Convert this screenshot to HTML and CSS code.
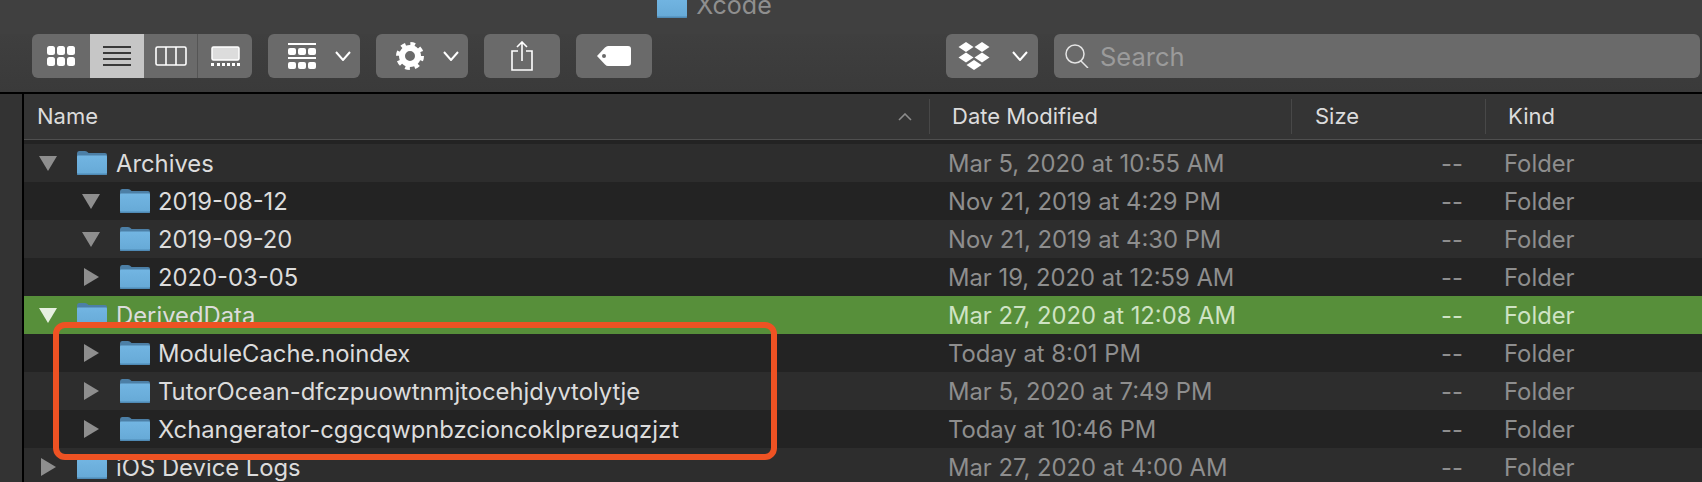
FILE: index.html
```html
<!DOCTYPE html>
<html lang="en">

<head>
    <meta charset="UTF-8">
    <meta name="viewport" content="width=device-width, initial-scale=1.0">
    <title>Xcode</title>
    <link rel="stylesheet" href="styles.css">
</head>

<body>

    <svg class="defs" width="0" height="0">
        <symbol id="folder" viewBox="0 0 30 24">
            <path d="M0 2.5Q0 0 2 0H8Q10 0 11 1.5L11.5 2H28Q30 2 30 4V8H0Z" fill="#4c7fa6" />
            <path d="M0 5.5Q0 4.5 1 4.5H29Q30 4.5 30 5.5V22Q30 24 28 24H2Q0 24 0 22Z" fill="url(#folderFill)" />
            <rect x="0" y="22.6" width="30" height="1.4" rx="0.7" fill="#4f8ab5" />
        </symbol>
        <linearGradient id="folderFill" x1="0" y1="0" x2="0" y2="1">
            <stop offset="0" stop-color="#72b5e2" />
            <stop offset="1" stop-color="#66a9d6" />
        </linearGradient>
        <symbol id="open" viewBox="0 0 18 18">
            <path d="M0 2H18L9 17Z" fill="currentColor" />
        </symbol>
        <symbol id="closed" viewBox="0 0 18 18">
            <path d="M2 0L17 9L2 18Z" fill="currentColor" />
        </symbol>
        <symbol id="chevron" viewBox="0 0 16 10">
            <path d="M1 1L8 9L15 1" fill="none" stroke="#fff" stroke-width="2" />
        </symbol>
    </svg>

    <div class="titlebar">
        <svg class="title-folder" width="30" height="24"><use href="#folder" /></svg>
        <span class="title-text">Xcode</span>
    </div>

    <header class="toolbar">
        <div class="btn-group">
            <button class="btn view-a">
                <svg width="28" height="20" viewBox="0 0 28 20" fill="#fff">
                    <rect x="0" y="0" width="8" height="9" rx="2.5" /><rect x="10" y="0" width="8" height="9" rx="2.5" /><rect x="20" y="0" width="8" height="9" rx="2.5" />
                    <rect x="0" y="11" width="8" height="9" rx="2.5" /><rect x="10" y="11" width="8" height="9" rx="2.5" /><rect x="20" y="11" width="8" height="9" rx="2.5" />
                </svg>
            </button>
            <button class="btn view-b selected">
                <svg width="28" height="20" viewBox="0 0 28 20" fill="#3a3a3a">
                    <rect y="0" width="28" height="2" /><rect y="6" width="28" height="2" /><rect y="12" width="28" height="2" /><rect y="18" width="28" height="2" />
                </svg>
            </button>
            <button class="btn view-c">
                <svg width="32" height="20" viewBox="0 0 32 20" fill="none" stroke="#fff" stroke-width="1.6">
                    <rect x="1" y="1" width="30" height="18" rx="1.5" /><path d="M11 1V19M21 1V19" />
                </svg>
            </button>
            <button class="btn view-d">
                <svg width="29" height="20" viewBox="0 0 29 20" fill="#fff">
                    <rect x="1" y="1" width="27" height="13" rx="1.5" fill="#dcdcdc" stroke="#fff" stroke-width="1.5" />
                    <rect x="0" y="17" width="3" height="3" /><rect x="6" y="17" width="3" height="3" /><rect x="11" y="17" width="3" height="3" /><rect x="16" y="17" width="3" height="3" /><rect x="21" y="17" width="3" height="3" /><rect x="26" y="17" width="3" height="3" />
                </svg>
            </button>
        </div>

        <button class="btn btn-arrange">
            <svg width="28" height="26" viewBox="0 0 28 26" fill="#fff">
                <rect y="0" width="28" height="2" /><rect y="14" width="28" height="2" />
                <rect x="0" y="5" width="8" height="7" rx="2" /><rect x="10" y="5" width="8" height="7" rx="2" /><rect x="20" y="5" width="8" height="7" rx="2" />
                <rect x="0" y="19" width="8" height="7" rx="2" /><rect x="10" y="19" width="8" height="7" rx="2" /><rect x="20" y="19" width="8" height="7" rx="2" />
            </svg>
            <svg class="chevron" width="16" height="10"><use href="#chevron" /></svg>
        </button>

        <button class="btn btn-action">
            <svg width="28" height="28" viewBox="0 0 28 28" fill="none" stroke="#fff">
                <circle cx="14" cy="14" r="8" stroke-width="6" />
                <circle cx="14" cy="14" r="11.5" stroke-width="5" stroke-dasharray="4.5 4.53" />
            </svg>
            <svg class="chevron" width="16" height="10"><use href="#chevron" /></svg>
        </button>

        <button class="btn btn-share">
            <svg width="22" height="30" viewBox="0 0 22 30" fill="none" stroke="#fff" stroke-width="1.6">
                <path d="M7 10H1V29H21V10H15" /><path d="M11 20V1M6 6L11 1L16 6" />
            </svg>
        </button>

        <button class="btn btn-tag">
            <svg width="34" height="20" viewBox="0 0 34 20">
                <path d="M0 10L8 1.5Q9.5 0 11 0H31Q34 0 34 3V17Q34 20 31 20H11Q9.5 20 8 18.5Z" fill="#fff" />
                <circle cx="7" cy="10" r="2" fill="#6a6a6a" />
            </svg>
        </button>

        <div class="toolbar-right">
            <button class="btn btn-dropbox">
                <svg width="32" height="28" viewBox="0 0 32 28" fill="#fff">
                    <path d="M8 0L15.5 5L8 10L.5 5Z" /><path d="M24 0L31.5 5L24 10L16.5 5Z" />
                    <path d="M8 10.5L15.5 15.5L8 20.5L.5 15.5Z" /><path d="M24 10.5L31.5 15.5L24 20.5L16.5 15.5Z" />
                    <path d="M16 18L23.5 23L16 28L8.5 23Z" />
                </svg>
                <svg class="chevron" width="16" height="10"><use href="#chevron" /></svg>
            </button>

            <div class="search">
                <svg width="25" height="24" viewBox="0 0 25 24" fill="none" stroke="#e4e4e4" stroke-width="1.5">
                    <circle cx="10" cy="10" r="9" /><path d="M16 17L23 24" />
                </svg>
                <span class="search-text">Search</span>
            </div>
        </div>
    </header>

    <div class="browser">
        <div class="side"></div>

        <main class="list">
            <div class="list-head">
                <div class="head-cell head-name">Name
                    <svg class="sort" width="14" height="8" viewBox="0 0 14 8" fill="none" stroke="#8c8c8c" stroke-width="1.6"><path d="M1 7L7 1L13 7" /></svg>
                </div>
                <div class="head-cell">Date Modified</div>
                <div class="head-cell head-size">Size</div>
                <div class="head-cell">Kind</div>
            </div>
            <div class="head-gap"></div>

            <div class="row">
                <div class="name"><svg class="tri"><use href="#open" /></svg><svg class="icon"><use href="#folder" /></svg>Archives</div>
                <div class="date">Mar 5, 2020 at 10:55 AM</div>
                <div class="size">--</div>
                <div class="kind">Folder</div>
            </div>
            <div class="row">
                <div class="name child"><svg class="tri"><use href="#open" /></svg><svg class="icon"><use href="#folder" /></svg>2019-08-12</div>
                <div class="date">Nov 21, 2019 at 4:29 PM</div>
                <div class="size">--</div>
                <div class="kind">Folder</div>
            </div>
            <div class="row">
                <div class="name child"><svg class="tri"><use href="#open" /></svg><svg class="icon"><use href="#folder" /></svg>2019-09-20</div>
                <div class="date">Nov 21, 2019 at 4:30 PM</div>
                <div class="size">--</div>
                <div class="kind">Folder</div>
            </div>
            <div class="row">
                <div class="name child"><svg class="tri"><use href="#closed" /></svg><svg class="icon"><use href="#folder" /></svg>2020-03-05</div>
                <div class="date">Mar 19, 2020 at 12:59 AM</div>
                <div class="size">--</div>
                <div class="kind">Folder</div>
            </div>
            <div class="row active">
                <div class="name"><svg class="tri"><use href="#open" /></svg><svg class="icon"><use href="#folder" /></svg>DerivedData</div>
                <div class="date">Mar 27, 2020 at 12:08 AM</div>
                <div class="size">--</div>
                <div class="kind">Folder</div>
            </div>
            <div class="row">
                <div class="name child"><svg class="tri"><use href="#closed" /></svg><svg class="icon"><use href="#folder" /></svg>ModuleCache.noindex</div>
                <div class="date">Today at 8:01 PM</div>
                <div class="size">--</div>
                <div class="kind">Folder</div>
            </div>
            <div class="row">
                <div class="name child"><svg class="tri"><use href="#closed" /></svg><svg class="icon"><use href="#folder" /></svg>TutorOcean-dfczpuowtnmjtocehjdyvtolytje</div>
                <div class="date">Mar 5, 2020 at 7:49 PM</div>
                <div class="size">--</div>
                <div class="kind">Folder</div>
            </div>
            <div class="row">
                <div class="name child"><svg class="tri"><use href="#closed" /></svg><svg class="icon"><use href="#folder" /></svg>Xchangerator-cggcqwpnbzcioncoklprezuqzjzt</div>
                <div class="date">Today at 10:46 PM</div>
                <div class="size">--</div>
                <div class="kind">Folder</div>
            </div>
            <div class="row">
                <div class="name"><svg class="tri"><use href="#closed" /></svg><svg class="icon"><use href="#folder" /></svg>iOS Device Logs</div>
                <div class="date">Mar 27, 2020 at 4:00 AM</div>
                <div class="size">--</div>
                <div class="kind">Folder</div>
            </div>
        </main>
    </div>

    <div class="callout"></div>

</body>

</html>
```

FILE: styles.css
```css
html,
body {
    height: 482px;
    overflow: hidden;
}

body {
    font-family: 'Inter', 'Liberation Sans', sans-serif;
    margin: 0;
    padding: 0;
    background-color: #232323;
    color: #dcdcdc;
    position: relative;
}

.defs {
    position: absolute;
}

.titlebar {
    height: 34px;
    box-sizing: border-box;
    display: flex;
    justify-content: center;
    align-items: flex-end;
    gap: 9px;
    padding: 0 273px 16px 0;
    overflow: hidden;
    background: #404040;
}

.title-folder {
    flex: none;
}

.title-text {
    font-size: 25px;
    line-height: 24px;
    color: #8f8f8f;
    margin-bottom: 1px;
}

.toolbar {
    height: 58px;
    box-sizing: border-box;
    display: flex;
    align-items: flex-start;
    gap: 16px;
    padding-left: 32px;
    background: linear-gradient(#3f3f3f, #3a3a3a);
}

.btn {
    height: 44px;
    padding: 0;
    border: 0;
    border-radius: 6px;
    background-color: #6a6a6a;
    display: flex;
    align-items: center;
    justify-content: center;
}

.btn-group {
    display: flex;
    height: 44px;
    width: 220px;
    border-radius: 6px;
    overflow: hidden;
}

.btn-group .btn {
    border-radius: 0;
}

.view-a {
    width: 58px;
}

.view-b {
    width: 54px;
}

.view-c {
    width: 53px;
}

.view-d {
    width: 55px;
    border-left: 1px solid #555;
    box-sizing: border-box;
}

.selected {
    background-color: #c6c6c6;
}

.btn-arrange,
.btn-action {
    width: 92px;
    justify-content: flex-start;
    padding-left: 20px;
}

.chevron {
    margin-left: 19px;
}

.btn-share,
.btn-tag {
    width: 76px;
}

.toolbar-right {
    margin-left: 278px;
    display: flex;
    gap: 16px;
    flex: 1;
    padding-right: 2px;
}

.btn-dropbox {
    width: 92px;
    justify-content: flex-start;
    padding-left: 12px;
}

.btn-dropbox .chevron {
    margin-left: 22px;
}

.search {
    flex: 1;
    height: 44px;
    border-radius: 6px;
    background-color: #6a6a6a;
    display: flex;
    align-items: center;
    gap: 10px;
    padding-left: 11px;
}

.search-text {
    font-size: 25.5px;
    color: #9b9b9b;
}

.browser {
    display: flex;
    border-top: 2px solid #000;
}

.side {
    width: 22px;
    flex: none;
    background-color: #333;
    border-right: 2px solid #000;
}

.list {
    flex: 1;
}

.list-head {
    height: 45px;
    display: grid;
    grid-template-columns: 905px 362px 194px 1fr;
    align-items: center;
    background-color: #343434;
    border-bottom: 1px solid #4f4f4f;
}

.head-cell {
    height: 35px;
    line-height: 35px;
    font-size: 22px;
    color: #dcdcdc;
    padding-left: 22px;
    border-left: 1px solid #484848;
}

.head-name {
    padding-left: 13px;
    border-left: 0;
    display: flex;
    justify-content: space-between;
    align-items: center;
    padding-right: 17px;
}

.head-size {
    padding-left: 23px;
}

.head-gap {
    height: 4px;
    background-color: #232323;
}

.row {
    height: 38px;
    display: grid;
    grid-template-columns: 905px 362px 194px 1fr;
    align-items: center;
    font-size: 23.8px;
    background-color: #232323;
}

.row:nth-of-type(odd) {
    background-color: #2d2d2d;
}

.name {
    display: flex;
    align-items: center;
    padding-left: 15px;
}

.name.child {
    padding-left: 58px;
}

.tri {
    width: 18px;
    height: 18px;
    flex: none;
    color: #8e8e8e;
    margin-right: 20px;
}

.icon {
    width: 30px;
    height: 24px;
    flex: none;
    margin-right: 9px;
}

.child .icon {
    margin-right: 8px;
}

.date,
.kind {
    padding-left: 19px;
    color: #8e8e8e;
}

.size {
    text-align: right;
    padding-right: 22px;
    color: #8e8e8e;
}

.row.active {
    background-color: #578f3a;
}

.row.active .tri {
    color: #e6f0e0;
}

.row.active .date,
.row.active .size,
.row.active .kind {
    color: #cfe3c4;
}

.callout {
    position: absolute;
    left: 53px;
    top: 322px;
    width: 724px;
    height: 138px;
    box-sizing: border-box;
    border: 6px solid #ee5223;
    border-radius: 12px;
}
```
